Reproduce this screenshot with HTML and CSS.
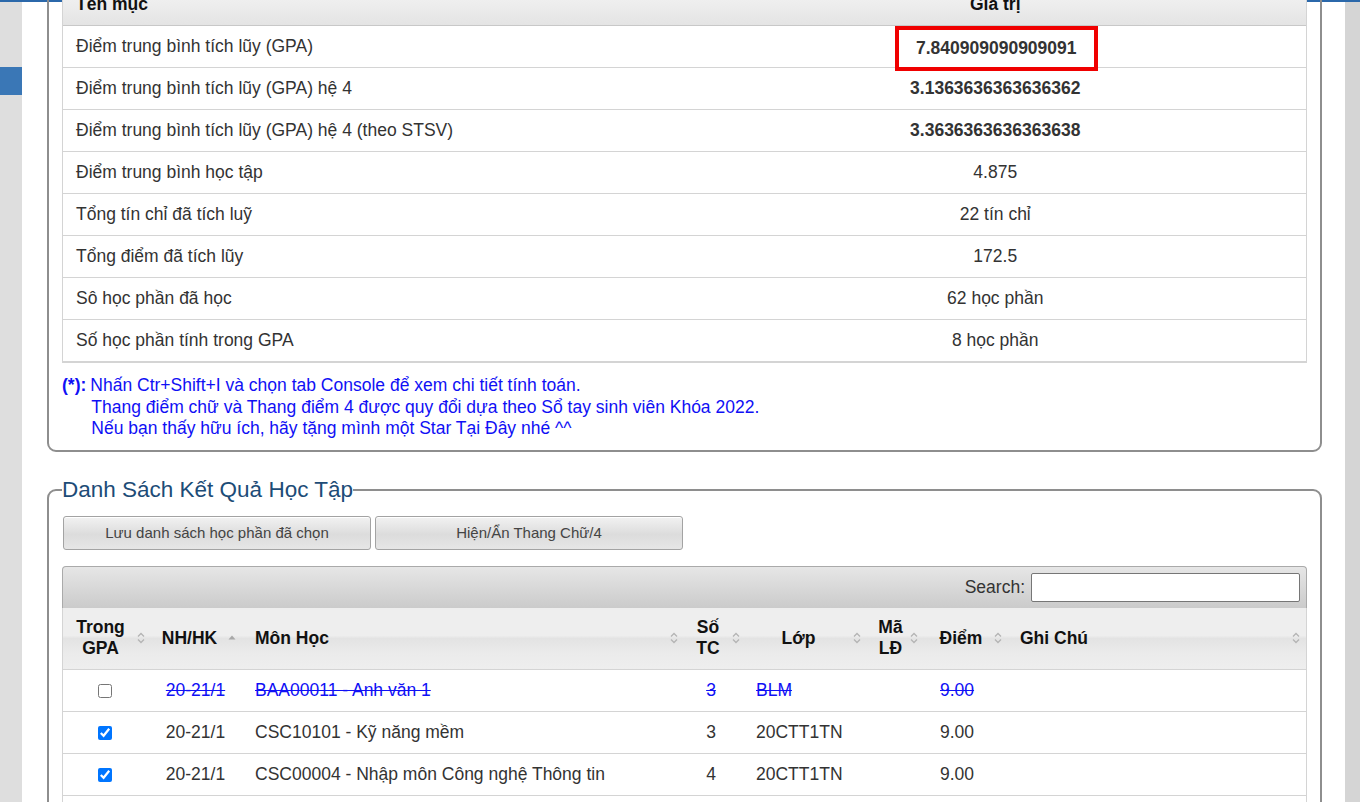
FILE: index.html
```html
<!DOCTYPE html>
<html lang="vi">
<head>
<meta charset="utf-8">
<title>Kết quả học tập</title>
<link rel="stylesheet" href="styles.css">
</head>
<body>
<div class="topline"></div>
<div class="layout">
  <aside class="side"><div class="side-tab"></div></aside>
  <main class="content">
    <fieldset class="box box-gpa">
      <table class="gpa">
        <colgroup><col class="gc1"><col class="gc2"></colgroup>
        <thead>
          <tr><th class="l">Tên mục</th><th>Giá trị</th></tr>
        </thead>
        <tbody>
          <tr><td>Điểm trung bình tích lũy (GPA)</td><td class="v"><b class="hl">7.840909090909091</b></td></tr>
          <tr><td>Điểm trung bình tích lũy (GPA) hệ 4</td><td class="v"><b>3.1363636363636362</b></td></tr>
          <tr><td>Điểm trung bình tích lũy (GPA) hệ 4 (theo STSV)</td><td class="v"><b>3.3636363636363638</b></td></tr>
          <tr><td>Điểm trung bình học tập</td><td class="v">4.875</td></tr>
          <tr><td>Tổng tín chỉ đã tích luỹ</td><td class="v">22 tín chỉ</td></tr>
          <tr><td>Tổng điểm đã tích lũy</td><td class="v">172.5</td></tr>
          <tr><td>Sô học phần đã học</td><td class="v">62 học phần</td></tr>
          <tr><td>Số học phần tính trong GPA</td><td class="v">8 học phần</td></tr>
        </tbody>
      </table>
      <div class="note">
        <b class="note-mark">(*):</b>
        <div class="note-lines">
          <div>Nhấn Ctr+Shift+I và chọn tab Console để xem chi tiết tính toán.</div>
          <div class="ind">Thang điểm chữ và Thang điểm 4 được quy đổi dựa theo Sổ tay sinh viên Khóa 2022.</div>
          <div class="ind">Nếu bạn thấy hữu ích, hãy tặng mình một Star Tại Đây nhé ^^</div>
        </div>
      </div>
    </fieldset>

    <fieldset class="box box-list">
      <legend>Danh Sách Kết Quả Học Tập</legend>
      <div class="btns">
        <button class="btn">Lưu danh sách học phần đã chọn</button>
        <button class="btn">Hiện/Ẩn Thang Chữ/4</button>
      </div>
      <div class="toolbar">
        <label class="search">Search: <input type="text" class="search-in"></label>
      </div>
      <table class="list">
        <colgroup>
          <col class="c1"><col class="c2"><col class="c3"><col class="c4"><col class="c5"><col class="c6"><col class="c7"><col class="c8">
        </colgroup>
        <thead>
          <tr>
            <th class="h1"><div class="th"><span class="lbl ctr">Trong<br>GPA</span><svg class="si" viewBox="0 0 8 12"><path d="M1 4.5L4 1.5L7 4.5M1 7.5L4 10.5L7 7.5"/></svg></div></th>
            <th class="h2"><div class="th"><span class="lbl ctr">NH/HK</span><svg class="si asc" viewBox="0 0 8 12"><path d="M0.5 7.5L4 3.5L7.5 7.5Z"/></svg></div></th>
            <th class="h3"><div class="th"><span class="lbl">Môn Học</span><svg class="si" viewBox="0 0 8 12"><path d="M1 4.5L4 1.5L7 4.5M1 7.5L4 10.5L7 7.5"/></svg></div></th>
            <th class="h4"><div class="th"><span class="lbl ctr">Số<br>TC</span><svg class="si" viewBox="0 0 8 12"><path d="M1 4.5L4 1.5L7 4.5M1 7.5L4 10.5L7 7.5"/></svg></div></th>
            <th class="h5"><div class="th"><span class="lbl ctr">Lớp</span><svg class="si" viewBox="0 0 8 12"><path d="M1 4.5L4 1.5L7 4.5M1 7.5L4 10.5L7 7.5"/></svg></div></th>
            <th class="h6"><div class="th"><span class="lbl ctr">Mã<br>LĐ</span><svg class="si" viewBox="0 0 8 12"><path d="M1 4.5L4 1.5L7 4.5M1 7.5L4 10.5L7 7.5"/></svg></div></th>
            <th class="h7"><div class="th"><span class="lbl ctr">Điểm</span><svg class="si" viewBox="0 0 8 12"><path d="M1 4.5L4 1.5L7 4.5M1 7.5L4 10.5L7 7.5"/></svg></div></th>
            <th class="h8"><div class="th"><span class="lbl">Ghi Chú</span><svg class="si" viewBox="0 0 8 12"><path d="M1 4.5L4 1.5L7 4.5M1 7.5L4 10.5L7 7.5"/></svg></div></th>
          </tr>
        </thead>
        <tbody>
          <tr class="off">
            <td class="d1"><input type="checkbox" class="cb"></td>
            <td class="d2"><span>20-21/1</span></td>
            <td class="d3"><span>BAA00011 - Anh văn 1</span></td>
            <td class="d4"><span>3</span></td>
            <td class="d5"><span>BLM</span></td>
            <td class="d6"></td>
            <td class="d7"><span>9.00</span></td>
            <td class="d8"></td>
          </tr>
          <tr>
            <td class="d1"><input type="checkbox" class="cb" checked></td>
            <td class="d2">20-21/1</td>
            <td class="d3">CSC10101 - Kỹ năng mềm</td>
            <td class="d4">3</td>
            <td class="d5">20CTT1TN</td>
            <td class="d6"></td>
            <td class="d7">9.00</td>
            <td class="d8"></td>
          </tr>
          <tr>
            <td class="d1"><input type="checkbox" class="cb" checked></td>
            <td class="d2">20-21/1</td>
            <td class="d3">CSC00004 - Nhập môn Công nghệ Thông tin</td>
            <td class="d4">4</td>
            <td class="d5">20CTT1TN</td>
            <td class="d6"></td>
            <td class="d7">9.00</td>
            <td class="d8"></td>
          </tr>
          <tr>
            <td class="d1"><input type="checkbox" class="cb" checked></td>
            <td class="d2">20-21/1</td>
            <td class="d3">MTH00003 - Vi tích phân 1B</td>
            <td class="d4">4</td>
            <td class="d5">20CTT1TN</td>
            <td class="d6"></td>
            <td class="d7">8.50</td>
            <td class="d8"></td>
          </tr>
        </tbody>
      </table>
    </fieldset>
  </main>
  <div class="rail"></div>
</div>
</body>
</html>
```
FILE: styles.css
```css
html, body {
  margin: 0;
  padding: 0;
  height: 802px;
  overflow: hidden;
  background: #fff;
}
body {
  font-family: "Liberation Sans", Arial, sans-serif;
  font-size: 17.5px;
  color: #333;
}
.topline {
  height: 2px;
  background: #2b68aa;
}
.layout {
  display: flex;
  height: 800px;
}
.side {
  width: 22px;
  flex: none;
  background: #dedede;
}
.side-tab {
  margin-top: 65px;
  height: 28px;
  background: #3a77b6;
}
.rail {
  width: 15px;
  flex: none;
  background: #d5d5d5;
}
.content {
  flex: 1;
  min-width: 0;
  background: #fff;
}

/* fieldsets */
.box {
  border: 2px solid #8e8e8e;
  border-radius: 9px;
  margin: 0 23px 0 25px;
  padding: 13px 13px 10px 13px;
  min-width: 0;
}
.box-gpa {
  margin-top: -33px;
}
.box-list {
  margin-top: 25px;
  padding-top: 13px;
}
.box-list legend {
  padding: 0;
  font-size: 22.5px;
  color: #1d4c77;
  font-family: "Liberation Sans", Arial, sans-serif;
}

/* GPA table */
.gpa {
  width: 100%;
  border-collapse: separate;
  border-spacing: 0;
  border: 1px solid #d4d4d4;
  border-top: 0;
  table-layout: fixed;
}
.gpa .gc1 { width: 50%; }
.gpa .gc2 { width: 50%; }
.gpa th, .gpa td {
  box-sizing: border-box;
  height: 42px;
  padding: 0 13px;
  border-bottom: 1px solid #d4d4d4;
  text-align: left;
  vertical-align: middle;
}
.gpa th {
  background: linear-gradient(#f6f6f6, #e4e4e4);
  color: #111;
  font-weight: bold;
  text-align: center;
  border-bottom-color: #c8c8c8;
}
.gpa th.l { text-align: left; }
.gpa td.v { text-align: center; }
.gpa b { color: #333; }
.hl {
  display: inline-block;
  border: 4px solid #f00000;
  padding: 8px 17px;
  margin: -12px -21px;
  position: relative;
  top: 2px;
  left: 1px;
}

/* note */
.note {
  display: flex;
  gap: 4px;
  margin-top: 12px;
  color: #1010f5;
  line-height: 21.5px;
}
.note-mark { color: #1010f5; }
.note-lines .ind { padding-left: 1px; }

/* buttons */
.btns {
  display: flex;
  gap: 4px;
  padding-left: 1px;
}
.btn {
  width: 308px;
  height: 34px;
  border: 1px solid #a3a3a3;
  border-radius: 3px;
  background: linear-gradient(#f2f2f2, #dcdcdc 55%, #e6e6e6);
  font-family: "Liberation Sans", Arial, sans-serif;
  font-size: 15px;
  color: #444;
  box-shadow: inset 0 1px 0 #fff;
}

/* toolbar */
.toolbar {
  margin-top: 16px;
  height: 42px;
  box-sizing: border-box;
  border: 1px solid #aaa;
  border-bottom: 0;
  border-radius: 4px 4px 0 0;
  background: linear-gradient(#e6e6e6, #cbcbcb);
  display: flex;
  justify-content: flex-end;
  align-items: center;
  padding-right: 6px;
}
.search {
  display: flex;
  align-items: center;
  gap: 6px;
  color: #333;
}
.search-in {
  width: 269px;
  height: 29px;
  box-sizing: border-box;
  border: 1px solid #767676;
  border-radius: 2px;
  background: #fff;
  margin: 0;
}

/* list table */
.list {
  width: 100%;
  table-layout: fixed;
  border-collapse: separate;
  border-spacing: 0;
  border-left: 1px solid #d4d4d4;
  border-right: 1px solid #d4d4d4;
}
.list .c1 { width: 88px; }
.list .c2 { width: 91px; }
.list .c3 { width: 442px; }
.list .c4 { width: 62px; }
.list .c5 { width: 121px; }
.list .c6 { width: 57px; }
.list .c7 { width: 84px; }
.list .c8 { width: auto; }
.list th {
  box-sizing: border-box;
  height: 62px;
  padding: 0 6px 0 10px;
  background: linear-gradient(#eeeeee 0, #eeeeee 45%, #e3e3e3 50%, #ebebeb 75%, #eeeeee 100%);
  border-bottom: 1px solid #d4d4d4;
  font-weight: bold;
  color: #111;
  line-height: 21px;
  vertical-align: middle;
}
.th {
  display: flex;
  align-items: center;
  gap: 4px;
}
.lbl { flex: 1; text-align: left; }
.lbl.ctr { text-align: center; }
.si {
  width: 8px;
  height: 12px;
  flex: none;
  fill: none;
  stroke: #b4b4b4;
  stroke-width: 1.3;
}
.si.asc {
  fill: #a8a8a8;
  stroke: none;
}
.list th.h1 { padding-left: 5px; }
.list th.h2 { padding-left: 4px; }
.list th.h3 { padding-left: 13px; }
.list th.h4 { padding-left: 4px; }
.list th.h5 { padding-left: 2px; }
.list th.h6 { padding-left: 8px; }
.list th.h7 { padding-left: 8px; }
.list th.h8 { padding-left: 12px; }

.list td {
  box-sizing: border-box;
  height: 42px;
  padding: 0 10px;
  border-bottom: 1px solid #d4d4d4;
  vertical-align: middle;
  white-space: nowrap;
}
.list .d1 { text-align: center; padding: 0 4px 0 0; }
.list .d2 { text-align: center; padding: 0 11px 0 9px; }
.list .d3 { padding-left: 13px; }
.list .d4 { text-align: center; padding: 0 18px 0 10px; }
.list .d5 { padding-left: 10px; }
.list .d7 { padding-left: 16px; }
.cb {
  width: 14px;
  height: 14px;
  margin: 0;
  vertical-align: middle;
}
.off td span {
  color: #1010f5;
  text-decoration: line-through;
}
```
